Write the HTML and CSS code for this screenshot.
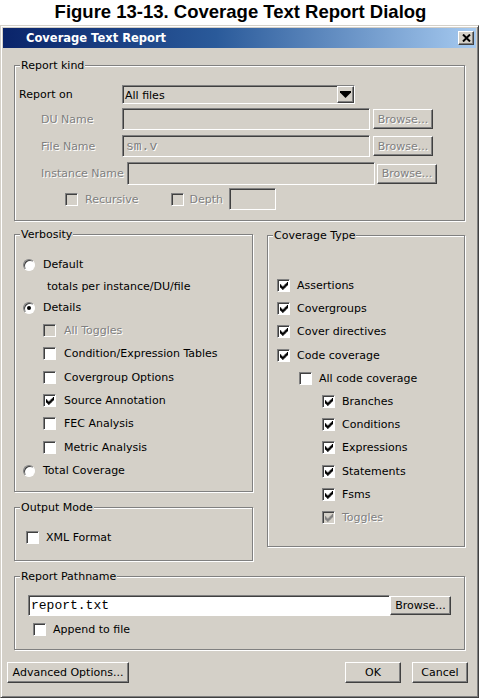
FILE: index.html
```html
<!DOCTYPE html>
<html lang="en">
<head>
<meta charset="utf-8">
<title>Coverage Text Report</title>
<link rel="stylesheet" href="styles.css">
</head>
<body>
<div class="caption">Figure 13-13. Coverage Text Report Dialog</div>
<div class="dialog">
  <div class="titlebar">
    <span class="title">Coverage Text Report</span>
    <span class="close"><svg width="9" height="8" viewBox="0 0 9 8"><path d="M1 0.5 L8 7.5 M8 0.5 L1 7.5" stroke="#000" stroke-width="2"/></svg></span>
  </div>
  <div class="content">
    <fieldset class="group g-kind">
      <legend>Report kind</legend>
      <div class="kind-body">
        <div class="row r-on">
          <span class="lbl w103">Report on</span>
          <div class="select"><span class="sel-text">All files</span><span class="drop"><svg width="11" height="7" viewBox="0 0 11 7"><polygon points="0,0 11,0 11,1.5 5.5,7 0,1.5" fill="#000"/></svg></span></div>
        </div>
        <div class="row r-du">
          <span class="lbl w103 sub dis">DU Name</span>
          <div class="field f-main"></div>
          <div class="btn browse dis">Browse...</div>
        </div>
        <div class="row r-file">
          <span class="lbl w103 sub dis">File Name</span>
          <div class="field f-main mono dis">sm.v</div>
          <div class="btn browse dis">Browse...</div>
        </div>
        <div class="row r-inst">
          <span class="lbl w108 sub dis">Instance Name</span>
          <div class="field f-main"></div>
          <div class="btn browse b-inst dis">Browse...</div>
        </div>
        <div class="row r-rec">
          <span class="cb off rec-cb"></span><span class="cl dis">Recursive</span>
          <span class="cb off depth-cb"></span><span class="cl dis">Depth</span>
          <div class="field depth-field"></div>
        </div>
      </div>
    </fieldset>

    <div class="cols">
      <div class="leftcol">
        <fieldset class="group g-verb">
          <legend>Verbosity</legend>
          <div class="verb-body">
            <div class="vrow h23"><span class="radio"></span><span class="rl">Default</span></div>
            <div class="vrow h20 totals">totals per instance/DU/file</div>
            <div class="vrow h23"><span class="radio on"></span><span class="rl">Details</span></div>
            <div class="vrow hx ind"><span class="cb off"></span><span class="cl dis">All Toggles</span></div>
            <div class="vrow hx ind"><span class="cb"></span><span class="cl">Condition/Expression Tables</span></div>
            <div class="vrow hx ind"><span class="cb"></span><span class="cl">Covergroup Options</span></div>
            <div class="vrow hx ind"><span class="cb"><svg viewBox="0 0 7 7"><path d="M6 0h1v1h-1z M5 1h2v1h-2z M0 2h1v1h-1z M4 2h3v1h-3z M0 3h2v1h-2z M3 3h3v1h-3z M0 4h5v1h-5z M1 5h3v1h-3z M2 6h1v1h-1z" fill="#000"/></svg></span><span class="cl">Source Annotation</span></div>
            <div class="vrow hx ind"><span class="cb"></span><span class="cl">FEC Analysis</span></div>
            <div class="vrow hx ind"><span class="cb"></span><span class="cl">Metric Analysis</span></div>
            <div class="vrow hx"><span class="radio"></span><span class="rl">Total Coverage</span></div>
          </div>
        </fieldset>
        <fieldset class="group g-out">
          <legend>Output Mode</legend>
          <div class="out-body">
            <div class="vrow h23"><span class="cb"></span><span class="cl">XML Format</span></div>
          </div>
        </fieldset>
      </div>

      <fieldset class="group g-cov">
        <legend>Coverage Type</legend>
        <div class="cov-body">
          <div class="vrow hc"><span class="cb"><svg viewBox="0 0 7 7"><path d="M6 0h1v1h-1z M5 1h2v1h-2z M0 2h1v1h-1z M4 2h3v1h-3z M0 3h2v1h-2z M3 3h3v1h-3z M0 4h5v1h-5z M1 5h3v1h-3z M2 6h1v1h-1z" fill="#000"/></svg></span><span class="cl">Assertions</span></div>
          <div class="vrow hc"><span class="cb"><svg viewBox="0 0 7 7"><path d="M6 0h1v1h-1z M5 1h2v1h-2z M0 2h1v1h-1z M4 2h3v1h-3z M0 3h2v1h-2z M3 3h3v1h-3z M0 4h5v1h-5z M1 5h3v1h-3z M2 6h1v1h-1z" fill="#000"/></svg></span><span class="cl">Covergroups</span></div>
          <div class="vrow hc"><span class="cb"><svg viewBox="0 0 7 7"><path d="M6 0h1v1h-1z M5 1h2v1h-2z M0 2h1v1h-1z M4 2h3v1h-3z M0 3h2v1h-2z M3 3h3v1h-3z M0 4h5v1h-5z M1 5h3v1h-3z M2 6h1v1h-1z" fill="#000"/></svg></span><span class="cl">Cover directives</span></div>
          <div class="vrow hc"><span class="cb"><svg viewBox="0 0 7 7"><path d="M6 0h1v1h-1z M5 1h2v1h-2z M0 2h1v1h-1z M4 2h3v1h-3z M0 3h2v1h-2z M3 3h3v1h-3z M0 4h5v1h-5z M1 5h3v1h-3z M2 6h1v1h-1z" fill="#000"/></svg></span><span class="cl">Code coverage</span></div>
          <div class="vrow hc ind1"><span class="cb"></span><span class="cl">All code coverage</span></div>
          <div class="vrow hc ind2"><span class="cb"><svg viewBox="0 0 7 7"><path d="M6 0h1v1h-1z M5 1h2v1h-2z M0 2h1v1h-1z M4 2h3v1h-3z M0 3h2v1h-2z M3 3h3v1h-3z M0 4h5v1h-5z M1 5h3v1h-3z M2 6h1v1h-1z" fill="#000"/></svg></span><span class="cl">Branches</span></div>
          <div class="vrow hc ind2"><span class="cb"><svg viewBox="0 0 7 7"><path d="M6 0h1v1h-1z M5 1h2v1h-2z M0 2h1v1h-1z M4 2h3v1h-3z M0 3h2v1h-2z M3 3h3v1h-3z M0 4h5v1h-5z M1 5h3v1h-3z M2 6h1v1h-1z" fill="#000"/></svg></span><span class="cl">Conditions</span></div>
          <div class="vrow hc ind2"><span class="cb"><svg viewBox="0 0 7 7"><path d="M6 0h1v1h-1z M5 1h2v1h-2z M0 2h1v1h-1z M4 2h3v1h-3z M0 3h2v1h-2z M3 3h3v1h-3z M0 4h5v1h-5z M1 5h3v1h-3z M2 6h1v1h-1z" fill="#000"/></svg></span><span class="cl">Expressions</span></div>
          <div class="vrow hc ind2"><span class="cb"><svg viewBox="0 0 7 7"><path d="M6 0h1v1h-1z M5 1h2v1h-2z M0 2h1v1h-1z M4 2h3v1h-3z M0 3h2v1h-2z M3 3h3v1h-3z M0 4h5v1h-5z M1 5h3v1h-3z M2 6h1v1h-1z" fill="#000"/></svg></span><span class="cl">Statements</span></div>
          <div class="vrow hc ind2"><span class="cb"><svg viewBox="0 0 7 7"><path d="M6 0h1v1h-1z M5 1h2v1h-2z M0 2h1v1h-1z M4 2h3v1h-3z M0 3h2v1h-2z M3 3h3v1h-3z M0 4h5v1h-5z M1 5h3v1h-3z M2 6h1v1h-1z" fill="#000"/></svg></span><span class="cl">Fsms</span></div>
          <div class="vrow hc ind2"><span class="cb off"><svg viewBox="0 0 7 7"><path d="M6 0h1v1h-1z M5 1h2v1h-2z M0 2h1v1h-1z M4 2h3v1h-3z M0 3h2v1h-2z M3 3h3v1h-3z M0 4h5v1h-5z M1 5h3v1h-3z M2 6h1v1h-1z" fill="#808080"/></svg></span><span class="cl dis">Toggles</span></div>
        </div>
      </fieldset>
    </div>

    <fieldset class="group g-path">
      <legend>Report Pathname</legend>
      <div class="path-body">
        <div class="row r-path">
          <div class="field white mono path-field">report.txt</div>
          <div class="btn path-browse">Browse...</div>
        </div>
        <div class="row r-append"><span class="cb"></span><span class="cl">Append to file</span></div>
      </div>
    </fieldset>

    <div class="btns">
      <div class="btn b-adv">Advanced Options...</div>
      <div class="btn b-ok">OK</div>
      <div class="btn b-cancel">Cancel</div>
    </div>
  </div>
</div>
</body>
</html>
```

FILE: styles.css
```css
* { box-sizing: border-box; }
html, body { margin: 0; }
body {
  background: #fff;
  font-family: "DejaVu Sans", Verdana, sans-serif;
  font-size: 11px;
  color: #000;
  width: 479px;
  height: 698px;
  overflow: hidden;
}
.caption {
  height: 25px;
  line-height: 23px;
  text-align: center;
  font-family: "Liberation Sans", Arial, sans-serif;
  font-weight: bold;
  font-size: 18.5px;
  padding-left: 2px;
}
.dialog {
  width: 479px;
  height: 673px;
  background: #d4d0c8;
  border: 1px solid;
  border-color: #d4d0c8 #404040 #404040 #d4d0c8;
  box-shadow: inset 1px 1px 0 #fff, inset -1px -1px 0 #808080;
  padding: 2px;
}
.titlebar {
  height: 20px;
  background: linear-gradient(to right, #0a246a, #2a5a9a 45%, #a6caf0);
  display: flex;
  align-items: center;
  justify-content: space-between;
  padding: 0 2px 0 23px;
}
.title { color: #fff; font-weight: bold; font-size: 11.5px; }
.close {
  width: 16px; height: 14px;
  background: #d4d0c8;
  border: 1px solid;
  border-color: #fff #404040 #404040 #fff;
  box-shadow: inset -1px -1px 0 #808080;
  display: flex; align-items: center; justify-content: center;
}
.close svg { display: block; }
.content { display: flex; flex-direction: column; align-items: flex-start; }

.group {
  margin: 0;
  padding: 0;
  min-width: 0;
  border: 1px solid #808080;
  box-shadow: 1px 1px 0 #fff, inset 1px 1px 0 #fff;
}
legend {
  margin-left: 5px;
  padding: 0 1px;
  line-height: 13px;
  background: #d4d0c8;
}

.row { display: flex; align-items: center; }
.lbl { flex: none; }
.w103 { width: 103px; }
.w108 { width: 108px; }
.sub { padding-left: 22px; }
.dis { color: #808080; text-shadow: 1px 1px 0 #fff; }
.mono { font-family: "Liberation Mono", "Courier New", monospace; font-size: 13px; }

/* Report kind */
.g-kind { margin: 11px 0 0 11px; width: 451px; }
.kind-body { padding: 13px 0 10px 4px; }
.r-on { height: 19px; }
.r-du { height: 22px; margin-top: 4px; }
.r-file { height: 22px; margin-top: 5px; }
.r-inst { height: 23px; margin-top: 5px; }
.r-rec { height: 22px; margin-top: 3px; }

.select {
  width: 233px; height: 19px;
  border: 1px solid;
  border-color: #808080 #fff #fff #808080;
  box-shadow: inset 1px 1px 0 #404040;
  display: flex; align-items: center; justify-content: space-between;
  padding: 1px 0 0 1px;
}
.sel-text { padding-left: 1px; }
.drop {
  width: 17px; height: 17px;
  background: #d4d0c8;
  border: 1px solid;
  border-color: #fff #404040 #404040 #fff;
  box-shadow: inset -1px -1px 0 #808080;
  display: flex; align-items: center; justify-content: center;
  margin-top: -1px;
}
.drop svg { display: block; }

.field {
  height: 100%;
  border: 1px solid;
  border-color: #808080 #fff #fff #808080;
  box-shadow: inset 1px 1px 0 #404040;
  background: #d4d0c8;
  display: flex; align-items: center;
  padding-left: 3px;
}
.f-main { width: 248px; }
.white { background: #fff; }

.btn {
  flex: none;
  height: 20px;
  background: #d4d0c8;
  border: 1px solid;
  border-color: #fff #404040 #404040 #fff;
  box-shadow: inset -1px -1px 0 #808080;
  display: flex; align-items: center; justify-content: center;
}
.browse { width: 60px; margin-left: 3px; }
.b-inst { margin-left: 2px; }

.cb {
  flex: none;
  width: 13px; height: 13px;
  border: 1px solid;
  border-color: #808080 #fff #fff #808080;
  box-shadow: inset 1px 1px 0 #404040;
  background: #fff;
  display: flex; align-items: center; justify-content: center;
}
.cb.off { background: #d4d0c8; }
.cb svg { width: 8px; height: 8px; display: block; margin: 1px 0 0 1px; }
.cl { margin-left: 7px; }
.rec-cb { margin-left: 46px; }
.depth-cb { margin-left: 32px; }
.depth-cb + .cl { margin-left: 6px; }
.depth-field { width: 47px; margin-left: 6px; }

/* Columns */
.cols { display: flex; align-items: flex-start; margin-left: 11px; }
.leftcol { display: flex; flex-direction: column; }

.g-verb { margin-top: 7px; width: 239px; }
.verb-body { padding: 12px 0 9px 8px; }
.vrow { display: flex; align-items: center; }
.h23 { height: 23px; }
.h20 { height: 20px; }
.hx { height: 23.33px; }
.hc { height: 23.2px; }
.totals { padding-left: 24px; }
.ind { padding-left: 20px; }
.ind .cl { margin-left: 8px; }
.rl { margin-left: 8px; }

.radio {
  flex: none;
  width: 12px; height: 12px;
  border-radius: 50%;
  border: 1px solid;
  border-color: #808080 #fff #fff #808080;
  box-shadow: inset 1px 1px 0 #404040;
  background: #fff;
  display: flex; align-items: center; justify-content: center;
}
.radio.on::after {
  content: "";
  width: 4px; height: 4px;
  border-radius: 50%;
  background: #000;
}

.g-out { margin-top: 9px; width: 239px; }
.out-body { padding: 12px 0 11px 11px; }

.g-cov { margin: 8px 0 0 14px; width: 198px; }
.cov-body { padding: 32px 0 17px 9px; }
.ind1 { padding-left: 22px; }
.ind2 { padding-left: 45px; }

/* Pathname */
.g-path { margin: 9px 0 0 11px; width: 451px; }
.path-body { padding: 12px 0 12px 13px; }
.r-path { height: 21px; }
.path-field { width: 362px; padding-left: 2px; }
.path-browse { width: 61px; height: 19px; }
.r-append { height: 16px; margin-top: 5px; padding-left: 5px; }

/* Bottom buttons */
.btns {
  align-self: stretch;
  display: flex;
  margin-top: 12px;
  padding: 0 8px 0 4px;
}
.btns .btn { height: 21px; }
.b-adv { width: 122px; }
.b-ok { width: 56px; margin-left: auto; }
.b-cancel { width: 56px; margin-left: 11px; }
```
